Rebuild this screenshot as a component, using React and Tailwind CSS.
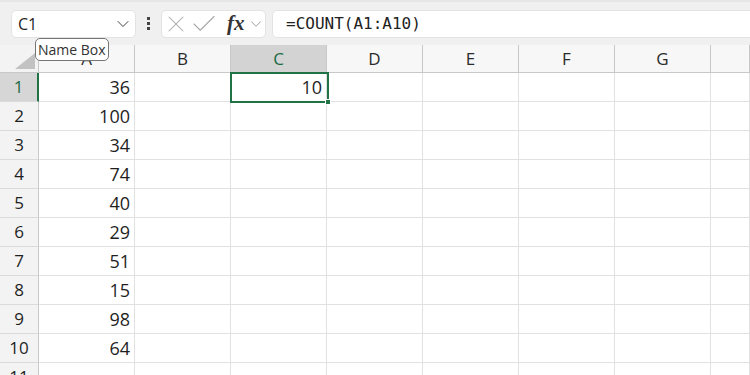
import React from 'react';
import { ChevronDown, X, Check } from 'lucide-react';

const columns = ['A', 'B', 'C', 'D', 'E', 'F', 'G', ''];
const values = [36, 100, 34, 74, 40, 29, 51, 15, 98, 64];

const App = () => {
    const rows = Array.from({ length: 11 }, (_, i) => i + 1);

    return (
        <div className="relative w-[750px] h-[375px] overflow-hidden bg-white font-['Open_Sans',sans-serif] text-[#1f1f1f]">
            {/* Formula bar */}
            <div className="flex items-center h-[45px] bg-[#f0f0f0] pl-[11px] border-t-[2px] border-[#e6e6e6]">
                <div className="flex items-center justify-between shrink-0 w-[125px] h-[28px] bg-white rounded-[5px] border border-[#e3e3e3] pl-[6px] pr-[2px]">
                    <span className="text-[16px] leading-none">C1</span>
                    <ChevronDown size={20} strokeWidth={1.2} className="shrink-0 text-[#444]" />
                </div>
                <div className="flex flex-col shrink-0 gap-[2px] ml-[11px] mr-[11px]">
                    <span className="w-[3px] h-[3px] bg-[#444]" />
                    <span className="w-[3px] h-[3px] bg-[#444]" />
                    <span className="w-[3px] h-[3px] bg-[#444]" />
                </div>
                <div className="flex items-center shrink-0 w-[105px] h-[28px] bg-white rounded-[5px] border border-[#e3e3e3] overflow-hidden">
                    <X size={28} strokeWidth={0.9} className="shrink-0 text-[#a8a8a8]" />
                    <Check size={30} strokeWidth={0.85} className="shrink-0 text-[#a8a8a8] -ml-[1px]" />
                    <span className="shrink-0 ml-[8px] font-['Liberation_Serif',serif] italic font-bold text-[21px] leading-none text-[#333]">fx</span>
                    <ChevronDown size={18} strokeWidth={1.1} className="shrink-0 text-[#888] ml-[2px]" />
                </div>
                <div className="flex items-center flex-1 h-[28px] ml-[6px] bg-white rounded-l-[5px] border border-r-0 border-[#e3e3e3] pl-[13px]">
                    <span className="font-['DejaVu_Sans_Mono',monospace] text-[16px] leading-none text-[#222]">=COUNT(A1:A10)</span>
                </div>
            </div>

            {/* Grid */}
            <div className="grid grid-cols-[39px_repeat(7,96px)_1fr] grid-rows-[28px_repeat(11,29px)]">
                {/* corner */}
                <div className="relative bg-[#f3f3f3] border-r border-b border-[#c8c8c8]">
                    <div className="absolute right-[3px] bottom-[3px] w-0 h-0 border-l-[20px] border-l-transparent border-b-[16px] border-b-[#c2c2c2]" />
                </div>
                {columns.map((c) => (
                    <div
                        key={c || 'H'}
                        className={`flex items-center justify-center text-[17px] border-r border-b border-[#c8c8c8] ${
                            c === 'C' ? 'bg-[#d3d3d3] text-[#1e6b43]' : 'bg-[#f7f7f7] text-[#2b2b2b]'
                        }`}
                    >
                        {c}
                    </div>
                ))}

                {rows.map((r) => (
                    <React.Fragment key={r}>
                        <div
                            className={`flex items-center justify-center text-[17px] border-b border-[#dadada] ${
                                r === 1
                                    ? 'bg-[#d6d6d6] text-[#1e6b43] border-r-2 border-r-[#217346]'
                                    : 'bg-[#f3f3f3] text-[#1f1f1f] border-r border-r-[#c8c8c8]'
                            }`}
                        >
                            {r}
                        </div>
                        {columns.map((c) => (
                            <div
                                key={c || 'H'}
                                className="flex items-center justify-end pr-[4px] text-[18px] border-r border-b border-[#e1e1e1]"
                            >
                                {c === 'A' && values[r - 1] !== undefined ? values[r - 1] : ''}
                                {c === 'C' && r === 1 ? 10 : ''}
                            </div>
                        ))}
                    </React.Fragment>
                ))}
            </div>

            {/* selected cell C1 */}
            <div className="absolute left-[230px] top-[72px] w-[99px] h-[31px] border-2 border-[#217346]">
                <div className="absolute right-[-4px] bottom-[-4px] w-[6px] h-[6px] bg-[#217346] border border-white" />
            </div>

            {/* tooltip */}
            <div className="absolute left-[35px] top-[38px] h-[23px] px-[2px] flex items-center bg-white border border-[#767676] rounded-[5px] text-[14px] text-[#333] leading-none">
                Name Box
            </div>
        </div>
    );
};

export default App;
